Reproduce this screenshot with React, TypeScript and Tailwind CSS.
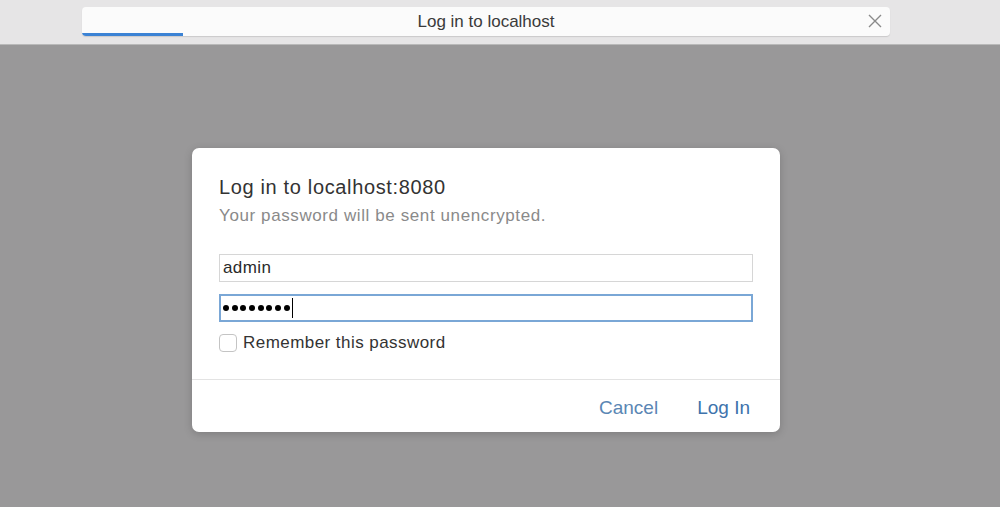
export default function App() {
  return (
    <div className="flex h-[507px] w-[1000px] flex-col overflow-hidden bg-[#999899] font-['Liberation_Sans',sans-serif]">
      {/* toolbar */}
      <div className="flex h-[45px] shrink-0 items-start border-b border-[#b9b9b9] bg-[#e6e5e6] pl-[82px] pt-[7px]">
        <div className="relative flex h-[29px] w-[808px] items-center justify-center overflow-hidden rounded-[4px] bg-[#fbfbfb] shadow-[0_1px_1px_rgba(0,0,0,0.12)]">
          <span className="text-[17px] text-[#3a3a3a]">Log in to localhost</span>
          <svg className="absolute right-[7px] top-[6px]" width="16" height="16" viewBox="0 0 16 16">
            <path d="M2 2 L14 14 M14 2 L2 14" stroke="#8a8a8a" strokeWidth="1.4" fill="none" />
          </svg>
          <div className="absolute bottom-0 left-0 h-[3px] w-[101px] bg-[#3b82d4]" />
        </div>
      </div>

      {/* dialog */}
      <div className="flex flex-1 justify-center pt-[103px]">
        <div className="ml-[-28px] w-[588px] self-start rounded-[7px] bg-white shadow-[0_2px_8px_rgba(0,0,0,0.18)]">
          <div className="px-[27px] pt-[27px] pb-[25px]">
            <div className="text-[20px] leading-[24px] tracking-[0.65px] text-[#333]">Log in to localhost:8080</div>
            <div className="mt-[7px] text-[17px] leading-[20px] tracking-[0.6px] text-[#8a8a8a]">Your password will be sent unencrypted.</div>
            <div className="mt-[28px] flex h-[28px] w-[534px] items-center border border-[#d6d6d6] px-[3px] text-[17px] tracking-[0.4px] text-[#2a2a2a]">
              admin
            </div>
            <div className="mt-[12px] flex h-[28px] w-[534px] items-center border-2 border-[#7aa7d6] px-[2px]">
              <div className="flex gap-[2.7px]">
                {Array.from({ length: 8 }, (_, i) => (
                  <span key={i} className="h-[6px] w-[6px] rounded-full bg-black" />
                ))}
              </div>
              <span className="ml-[2px] h-[20px] w-[1.5px] bg-black" />
            </div>
            <div className="mt-[10px] flex h-[22px] items-center gap-[6px]">
              <div className="h-[18px] w-[18px] rounded-[4px] border border-[#c4c4c4] bg-white" />
              <span className="text-[17px] tracking-[0.45px] text-[#333]">Remember this password</span>
            </div>
          </div>
          <div className="border-t border-[#e3e3e3]" />
          <div className="flex justify-end gap-[39px] px-[30px] pt-[17px] pb-[13px] text-[19px] leading-[22px]">
            <span className="text-[#5a86b4]">Cancel</span>
            <span className="text-[#3e73ac]">Log In</span>
          </div>
        </div>
      </div>
    </div>
  )
}
